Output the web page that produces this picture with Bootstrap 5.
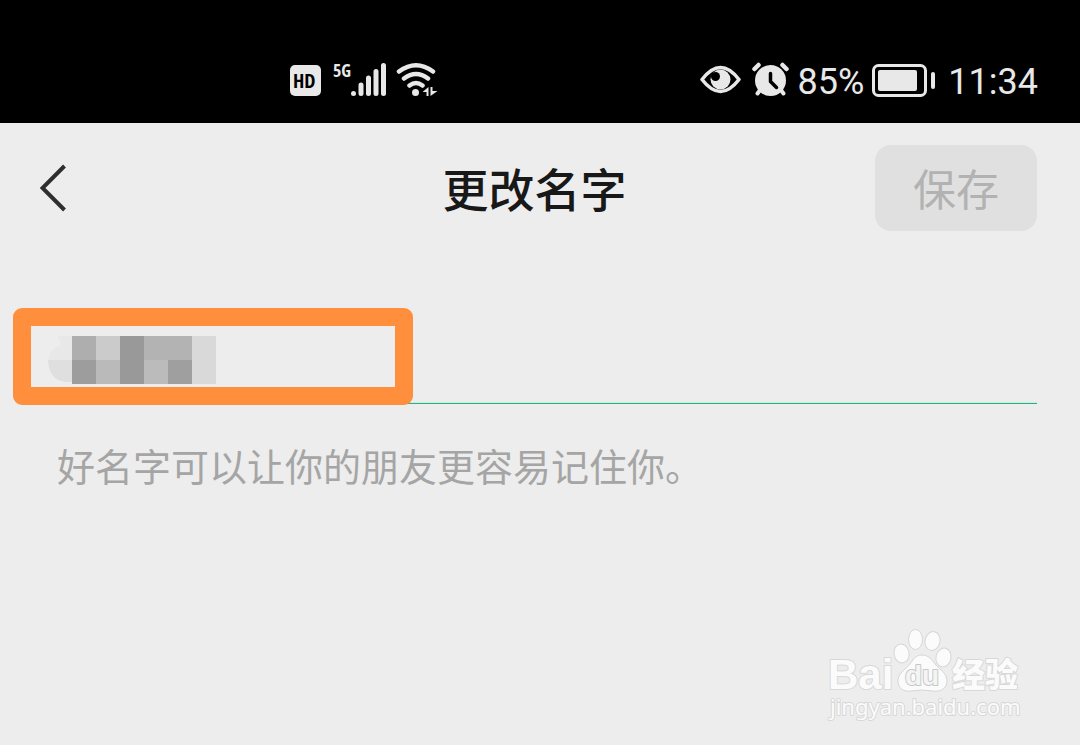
<!DOCTYPE html>
<html lang="zh-CN">
<head>
<meta charset="utf-8">
<meta name="viewport" content="width=device-width, initial-scale=1">
<title>更改名字</title>
<link href="https://cdn.jsdelivr.net/npm/bootstrap@5.3.0/dist/css/bootstrap.min.css" rel="stylesheet">
<style>
  body { background: #ededed; font-family: Roboto, "Noto Sans CJK SC", sans-serif; }
  .status-bar { background: #000; color: #e8e8e8; height: 123px; padding: 36px 42px 0 289px; font-size: 36px; line-height: 44px; }
  .status-bar svg { display: block; flex: none; }
  .battery-icon { margin: 0 12px 0 8px; }
  .title-bar { display: grid; grid-template-columns: 1fr auto 1fr; padding: 22px 43px 0 32px; }
  .back-btn { border: 0; background: none; padding: 0 8px; }
  .page-title { font-size: 46px; line-height: 64px; font-weight: 500; color: #181818; padding-top: 6px; }
  .save-btn, .save-btn:disabled { width: 162px; height: 86px; border: 0; border-radius: 16px; background: #e0e0e0; color: #b2b2b2; font-size: 43px; line-height: 64px; opacity: 1; padding: 6px 0 0; }
  .name-field { margin: 77px 43px 0; border-bottom: 1px solid #2eae7d; }
  .name-input, .name-input:focus { height: 95px; border: 0; border-bottom: 1px solid #c4f2df; border-radius: 0; background: transparent; box-shadow: none; font-size: 43px; transition: none; }
  .highlight-box { position: absolute; left: -30px; top: 0; width: 400px; height: 97px; border: 18px solid #ff8f3c; border-radius: 9px; background: #ededed; }
  .highlight-box svg { display: block; margin: 9px 0 0 16px; }
  .hint { margin: 0; padding: 36px 57px 0; font-size: 38px; line-height: 56px; color: #a5a5a5; }
  .watermark { padding: 0 51px 17px 0; }
  .watermark text { fill: #fbfbfb; stroke: #d8d8d8; stroke-width: 2px; paint-order: stroke; stroke-linejoin: round; }
  .watermark .paw-text { fill: #f4f4f4; stroke: #c8c8c8; }
</style>
</head>
<body class="d-flex flex-column min-vh-100">
<header class="status-bar d-flex align-items-center">
  <div class="d-flex me-auto">
    <svg width="150" height="44" viewBox="289 58 150 44" fill="#e8e8e8" role="img" aria-label="HD 5G Wi-Fi">
      <rect x="290" y="65" width="31" height="31" rx="5"/>
      <text x="293" y="88" font-size="20" font-weight="700" fill="#000" font-family="'Open Sans Condensed', 'DejaVu Sans Condensed', Roboto">HD</text>
      <text x="333" y="77" font-size="18" font-weight="700" font-family="'Open Sans Condensed', 'DejaVu Sans Condensed', Roboto">5G</text>
      <g stroke="#e8e8e8" stroke-width="5" stroke-linecap="round">
        <path d="M353.500 93.500v0M361 85v8.500M368.500 78v15.500M376 71.500v22M383.500 65.500v28"/>
      </g>
      <g fill="none" stroke="#e8e8e8" stroke-width="4.500" stroke-linecap="round">
        <path d="M399 71.500q17-12.500 34 0M404 78.500q12-9 24 0M409.500 85.500q6.500-5 13 0"/>
      </g>
      <circle cx="415.500" cy="92.500" r="3.500"/>
      <path d="M422.500 92l6-5v9h-2v-4zM430.500 96v-9h2v4h5z"/>
    </svg>
  </div>
  <svg width="98" height="44" viewBox="700 58 98 44" fill="none" stroke="#e8e8e8" role="img" aria-label="护眼 闹钟">
    <path d="M702 79.500Q720.500 55.500 739 79.500Q720.500 103.500 702 79.500Z" stroke-width="3.500" stroke-linejoin="round"/>
    <circle cx="720.500" cy="79.500" r="10" fill="#e8e8e8" stroke="none"/>
    <circle cx="715.500" cy="76.500" r="4.500" fill="#000" stroke="none"/>
    <circle cx="770.500" cy="80.500" r="15.500" fill="#e8e8e8" stroke="none"/>
    <path d="M754.500 69l4-4M782.500 65l4 4" stroke-width="4.500" stroke-linecap="round"/>
    <path d="M757.500 93.500l3-4M783.500 93.500l-3-4" stroke-width="4" stroke-linecap="round"/>
    <path d="M770.500 73.500v8l6 6" stroke="#000" stroke-width="3.500" stroke-linecap="round" stroke-linejoin="round"/>
  </svg>
  <span class="pt-1">85%</span>
  <svg class="battery-icon" width="64" height="44" viewBox="872 58 64 44" fill="#e8e8e8" role="img" aria-label="电量">
    <rect x="873.500" y="65.500" width="52" height="30" rx="5" fill="none" stroke="#e8e8e8" stroke-width="3"/>
    <rect x="878" y="70" width="39" height="21" rx="2"/>
    <rect x="931" y="72" width="4" height="17" rx="2"/>
  </svg>
  <time class="pt-1">11:34</time>
</header>

<nav class="title-bar align-items-center" aria-label="标题栏">
  <button type="button" class="back-btn text-start" aria-label="返回">
    <svg class="d-block" width="28" height="50" viewBox="40 163 28 50" fill="none" stroke="#2e2e2e" stroke-width="4"><path d="M64.500 166L42.500 188L64.500 210"/></svg>
  </button>
  <h1 class="page-title m-0">更改名字</h1>
  <button type="button" class="btn save-btn ms-auto" disabled>保存</button>
</nav>

<main>
  <div class="name-field position-relative">
    <input id="nickname" type="text" class="form-control name-input" aria-label="名字" aria-describedby="nickname-hint">
    <div class="highlight-box" aria-hidden="true">
      <svg width="170" height="50" viewBox="47 335 170 50">
        <path d="M58 336h14v24H48q2-12 13-15z" fill="#e8e8e8"/>
        <path d="M48 360h24v22q-23 2-24-22z" fill="#dfdfdf"/>
        <g shape-rendering="crispEdges">
          <path d="M72 336h24v24H72z" fill="#aeaeae"/><path d="M96 336h24v24H96z" fill="#cbcbcb"/>
          <path d="M120 336h24v48h-24z" fill="#999"/><path d="M144 336h48v24h-48z" fill="#b3b3b3"/>
          <path d="M192 336h24v48h-24z" fill="#d9d9d9"/><path d="M72 360h24v24H72z" fill="#9d9d9d"/>
          <path d="M96 360h24v24H96z" fill="#bababa"/><path d="M144 360h24v24h-24z" fill="#bbb"/>
          <path d="M168 360h24v24h-24z" fill="#9f9f9f"/>
        </g>
      </svg>
    </div>
  </div>
  <p id="nickname-hint" class="hint">好名字可以让你的朋友更容易记住你。</p>
</main>

<footer class="watermark d-flex justify-content-end mt-auto">
  <svg width="204" height="102" viewBox="825 626 204 102" role="img" aria-label="Baidu 经验">
    <g fill="#fbfbfb" stroke="#d6d6d6">
      <ellipse cx="901.500" cy="653.500" rx="7.500" ry="9.500" transform="rotate(-10 901.500 653.500)"/>
      <ellipse cx="915.500" cy="639.500" rx="7" ry="10"/>
      <ellipse cx="932.500" cy="641" rx="7.500" ry="9.500" transform="rotate(12 932.500 641)"/>
      <ellipse cx="943.500" cy="657.500" rx="7.500" ry="9.500" transform="rotate(12 943.500 657.500)"/>
      <path d="M922 655c7 0 10 5 13 9c5 6 12 9 12 17c0 8-7 11-14 10q-11-2-22 0c-8 1-13-3-13-10c0-8 7-11 12-17c3-4 5-9 12-9z"/>
    </g>
    <g font-family="'Liberation Sans', sans-serif" font-weight="700">
      <text x="828" y="689" font-size="42">Bai</text>
      <text class="paw-text" x="905" y="685" font-size="28">du</text>
    </g>
    <text x="952" y="687" font-size="33" font-weight="900" font-family="'Noto Sans CJK SC', sans-serif">经验</text>
    <text x="830" y="715" font-size="22" font-family="'Noto Sans', sans-serif">jingyan.baidu.com</text>
  </svg>
</footer>
<script src="https://cdn.jsdelivr.net/npm/bootstrap@5.3.0/dist/js/bootstrap.bundle.min.js"></script>
</body>
</html>
